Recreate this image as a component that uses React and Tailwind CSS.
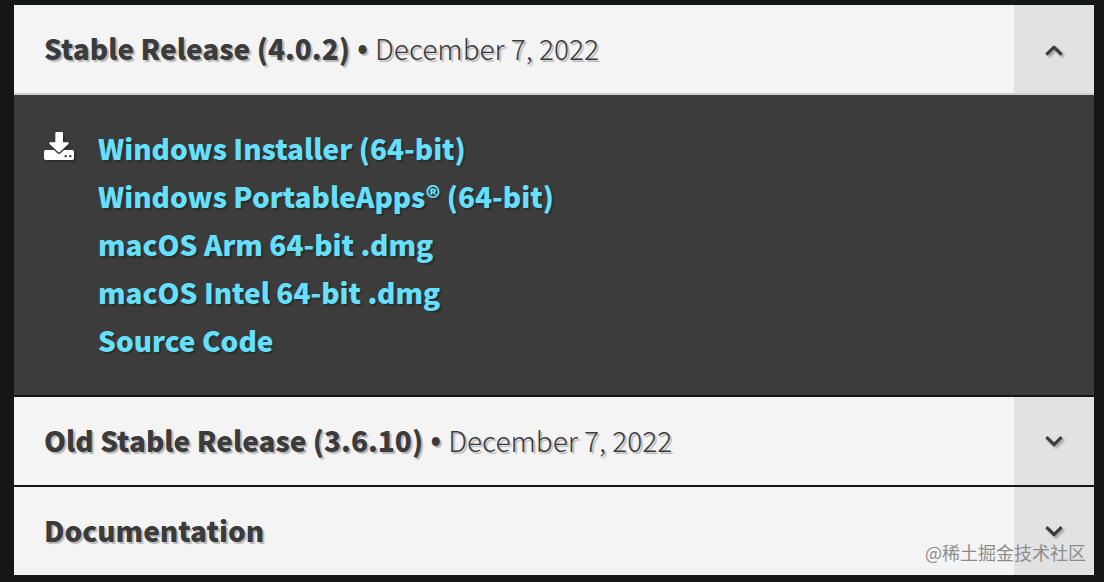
import { useState } from "react";

function Chevron({ open }) {
  return (
    <svg
      viewBox="0 0 20 14"
      className="h-[14px] w-5 overflow-visible drop-shadow-[2px_2px_1px_rgba(0,0,0,0.3)]"
      fill="none"
      stroke="#3b3b3b"
      strokeWidth="3.2"
      strokeLinejoin="round"
      aria-hidden="true"
    >
      <path d={open ? "M2.4 12.6 10 5.2 17.6 12.6" : "M2.4 3.2 10 10.6 17.6 3.2"} />
    </svg>
  );
}

function DownloadIcon() {
  return (
    <svg
      viewBox="0 0 90 84"
      className="h-7 w-[30px] shrink-0 drop-shadow-[2px_2px_1px_rgba(0,0,0,0.3)]"
      fill="#ffffff"
      aria-hidden="true"
    >
      <path d="M38 0h15q4 0 4 4v27h14q6 0 2 5L48 60q-3 3-6 0L17 36q-4-5 2-5h15V4q0-4 4-4z" />
      <path
        fillRule="evenodd"
        d="M5 54h25l10 10q5 4 10 0l10-10h25q5 0 5 5v20q0 5-5 5H5q-5 0-5-5V59q0-5 5-5zM65 69a3.5 3.5 0 1 0 0 7 3.5 3.5 0 0 0 0-7zm14 0a3.5 3.5 0 1 0 0 7 3.5 3.5 0 0 0 0-7z"
      />
    </svg>
  );
}

const downloads = [
  "Windows Installer (64-bit)",
  "Windows PortableApps® (64-bit)",
  "macOS Arm 64-bit .dmg",
  "macOS Intel 64-bit .dmg",
  "Source Code",
];

function Section({ title, date, initiallyOpen = false, children }) {
  const [open, setOpen] = useState(initiallyOpen);
  const expanded = open && Boolean(children);
  return (
    <section>
      <h3>
        <button
          type="button"
          aria-expanded={expanded}
          onClick={() => setOpen(!open)}
          className="flex w-full cursor-pointer items-stretch bg-[#f4f4f4] text-left text-[#3b3b3b]"
        >
          <span className="flex-1 px-[30px] pt-[19px] pb-[21px] text-[28px] leading-[48px] font-black [text-shadow:2px_2px_1px_rgba(0,0,0,0.25)]">
            {title}
            {date && (
              <>
                <span className="font-['Open_Sans',sans-serif] leading-none font-bold"> • </span>
                <span className="font-light">{date}</span>
              </>
            )}
          </span>
          <span className="flex w-20 shrink-0 items-center justify-center bg-[#e2e2e2]">
            <Chevron open={expanded} />
          </span>
        </button>
      </h3>
      {expanded && (
        <div className="flex gap-6 border-t-2 border-[#cfcfcf] bg-[#3c3c3c] px-[30px] pt-[29px] pb-[31px]">
          <div className="pt-2">
            <DownloadIcon />
          </div>
          <ul className="text-[28px] leading-[48px] font-black text-[#66e0ff] [text-shadow:2px_2px_1px_rgba(0,0,0,0.25)]">
            {children.map((name) => (
              <li key={name}>
                <a href="#download">{name}</a>
              </li>
            ))}
          </ul>
        </div>
      )}
    </section>
  );
}

export default function App() {
  return (
    <main className="min-h-screen bg-[#151616] pt-[5px] pr-[10px] pb-[7px] pl-[14px] font-['Noto_Sans_CJK_SC',sans-serif]">
      <div className="relative flex flex-col gap-0.5">
        <Section title="Stable Release (4.0.2)" date="December 7, 2022" initiallyOpen>
          {downloads}
        </Section>
        <Section title="Old Stable Release (3.6.10)" date="December 7, 2022" />
        <Section title="Documentation" />
        <span className="pointer-events-none absolute right-2 bottom-[9px] text-lg leading-7 text-[#8c8c8c]">
          @稀土掘金技术社区
        </span>
      </div>
    </main>
  );
}
